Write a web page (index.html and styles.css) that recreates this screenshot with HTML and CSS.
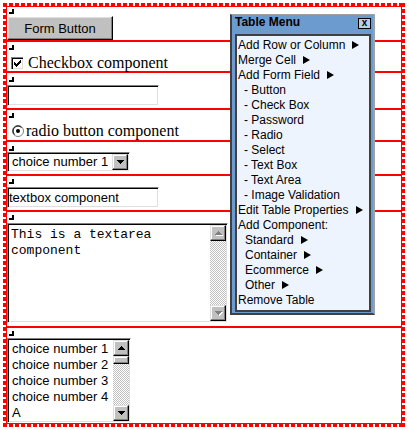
FILE: index.html
```html
<!DOCTYPE html>
<html lang="en">
<head>
    <meta charset="UTF-8">
    <meta name="viewport" content="width=device-width, initial-scale=1.0">
    <title>Form Table Editor</title>
    <link rel="stylesheet" href="styles.css">
</head>
<body>
    <div class="frame">
        <div class="grid">
            <div class="row r-button">
                <span class="mark"></span>
                <button class="btn">Form Button</button>
            </div>
            <div class="row r-check">
                <span class="mark"></span>
                <label class="choice">
                    <svg class="check" width="12" height="12" viewBox="0 0 12 12" shape-rendering="crispEdges">
                        <rect x="0" y="0" width="12" height="12" fill="#808080"/>
                        <rect x="1" y="1" width="11" height="11" fill="#000"/>
                        <rect x="2" y="2" width="10" height="10" fill="#dfdfdf"/>
                        <rect x="2" y="2" width="9" height="9" fill="#fff"/>
                        <path d="M2 4h1v3H2zM3 5h1v3H3zM4 6h1v3H4zM5 5h1v3H5zM6 4h1v3H6zM7 3h1v3H7zM8 2h1v3H8z" fill="#000" transform="translate(1 1)"/>
                    </svg>Checkbox component
                </label>
            </div>
            <div class="row r-text">
                <span class="mark"></span>
                <div class="sunken input"></div>
            </div>
            <div class="row r-radio">
                <span class="mark"></span>
                <label class="choice">
                    <svg class="radio" width="12" height="12" viewBox="0 0 12 12">
                        <circle cx="6" cy="6" r="5.5" fill="#fff" stroke="#808080"/>
                        <path d="M2.5 9.5A4.6 4.6 0 0 1 9.5 2.5" stroke="#000" fill="none"/>
                        <circle cx="6" cy="6" r="2" fill="#000"/>
                    </svg>radio button component
                </label>
            </div>
            <div class="row r-select">
                <span class="mark"></span>
                <div class="sunken select">
                    <span class="select-text">choice number 1</span>
                    <span class="sbtn">
                        <svg width="7" height="4" viewBox="0 0 7 4" shape-rendering="crispEdges"><path d="M0 0h7v1H0zM1 1h5v1H1zM2 2h3v1H2zM3 3h1v1H3z"/></svg>
                    </span>
                </div>
            </div>
            <div class="row r-textbox">
                <span class="mark"></span>
                <div class="sunken input">textbox component</div>
            </div>
            <div class="row r-area">
                <span class="mark"></span>
                <div class="sunken textarea">
                    <div class="area-text">This is a textarea component</div>
                    <div class="scroll">
                        <span class="sbtn off">
                            <svg width="7" height="4" viewBox="0 0 7 4" shape-rendering="crispEdges"><path d="M3 0h1v1H3zM2 1h3v1H2zM1 2h5v1H1zM0 3h7v1H0z"/></svg>
                        </span>
                        <span class="sbtn off down">
                            <svg width="7" height="4" viewBox="0 0 7 4" shape-rendering="crispEdges"><path d="M0 0h7v1H0zM1 1h5v1H1zM2 2h3v1H2zM3 3h1v1H3z"/></svg>
                        </span>
                    </div>
                </div>
            </div>
            <div class="row r-list">
                <span class="mark"></span>
                <div class="sunken listbox">
                    <ul class="options">
                        <li>choice number 1</li>
                        <li>choice number 2</li>
                        <li>choice number 3</li>
                        <li>choice number 4</li>
                        <li>A</li>
                    </ul>
                    <div class="scroll">
                        <span class="sbtn">
                            <svg width="7" height="4" viewBox="0 0 7 4" shape-rendering="crispEdges"><path d="M3 0h1v1H3zM2 1h3v1H2zM1 2h5v1H1zM0 3h7v1H0z"/></svg>
                        </span>
                        <span class="sbtn thumb"></span>
                        <span class="sbtn down">
                            <svg width="7" height="4" viewBox="0 0 7 4" shape-rendering="crispEdges"><path d="M0 0h7v1H0zM1 1h5v1H1zM2 2h3v1H2zM3 3h1v1H3z"/></svg>
                        </span>
                    </div>
                </div>
            </div>
        </div>
    </div>

    <div class="menu">
        <div class="menu-title">
            <span>Table Menu</span>
            <span class="close">x</span>
        </div>
        <ul class="menu-body">
            <li>Add Row or Column<span class="tri"></span></li>
            <li>Merge Cell<span class="tri"></span></li>
            <li>Add Form Field<span class="tri"></span></li>
            <li class="sub">- Button</li>
            <li class="sub">- Check Box</li>
            <li class="sub">- Password</li>
            <li class="sub">- Radio</li>
            <li class="sub">- Select</li>
            <li class="sub">- Text Box</li>
            <li class="sub">- Text Area</li>
            <li class="sub">- Image Validation</li>
            <li>Edit Table Properties<span class="tri"></span></li>
            <li>Add Component:</li>
            <li class="sub2">Standard<span class="tri"></span></li>
            <li class="sub2">Container<span class="tri"></span></li>
            <li class="sub2">Ecommerce<span class="tri"></span></li>
            <li class="sub2">Other<span class="tri"></span></li>
            <li>Remove Table</li>
        </ul>
    </div>
</body>
</html>
```

FILE: styles.css
```css
body {
    margin: 0;
    background-color: #fff;
    color: #000;
    font-family: "Liberation Serif", "Times New Roman", serif;
    font-size: 16px;
}

/* dashed outline round the whole table */
.frame {
    width: 396px;
    margin: 3px;
    padding: 3px;
    background:
        repeating-linear-gradient(90deg, red 0 4px, transparent 4px 6px) top / 100% 3px no-repeat,
        repeating-linear-gradient(90deg, red 0 4px, transparent 4px 6px) bottom / 100% 3px no-repeat,
        repeating-linear-gradient(180deg, red 0 4px, transparent 4px 6px) left / 3px 100% no-repeat,
        repeating-linear-gradient(180deg, red 0 4px, transparent 4px 6px) right / 3px 100% no-repeat;
}

.grid {
    border: 1px solid red;
}

.row {
    display: flex;
    flex-direction: column;
    align-items: flex-start;
    border-bottom: 2px solid red;
}

.row:last-child {
    border-bottom: none;
}

.r-button { height: 33px; }
.r-check { height: 29px; }
.r-text { height: 35px; }
.r-radio { height: 30px; }
.r-select { height: 32px; }
.r-textbox { height: 34px; }
.r-area { height: 114px; }
.r-list { height: 95px; }

.mark {
    flex: none;
    width: 3px;
    height: 3px;
    margin: 3px 0 0 2px;
    border-right: 2px solid #000;
    border-bottom: 2px solid #000;
}

.r-button .mark { margin-top: 2px; }
.r-text .mark,
.r-select .mark { margin-top: 4px; }

.btn {
    width: 106px;
    height: 24px;
    margin-top: 2px;
    padding: 0;
    font: 13px "Liberation Sans", Arial, sans-serif;
    color: #000;
    background-color: #c0c0c0;
    border: 1px solid;
    border-color: #fff #000 #000 #fff;
    box-shadow: inset -1px -1px #808080, inset 1px 1px #dfdfdf;
}

.choice {
    display: block;
    line-height: 18px;
    margin-top: 4px;
}

.r-radio .choice { margin-top: 4px; }

.choice svg {
    vertical-align: -1px;
}

.check { margin: 0 5px 0 4px; }
.radio { margin: 0 2px 0 5px; }

/* win95 style sunken fields */
.sunken {
    box-sizing: border-box;
    background-color: #fff;
    border: 1px solid;
    border-color: #808080 #fff #fff #808080;
    box-shadow: inset 1px 1px #000, inset -1px -1px #dfdfdf;
    font: 13px "Liberation Sans", Arial, sans-serif;
}

.input {
    width: 152px;
    height: 21px;
    margin-top: 3px;
    padding-left: 1px;
    line-height: 19px;
    white-space: nowrap;
}

.select {
    display: flex;
    width: 123px;
    height: 20px;
    margin-top: 1px;
    padding: 1px;
}

.select-text {
    flex: 1;
    padding-left: 3px;
    line-height: 16px;
}

.sbtn {
    display: flex;
    align-items: center;
    justify-content: center;
    flex: none;
    width: 16px;
    height: 16px;
    box-sizing: border-box;
    background-color: #c0c0c0;
    border: 1px solid;
    border-color: #dfdfdf #000 #000 #dfdfdf;
    box-shadow: inset -1px -1px #808080, inset 1px 1px #fff;
}

.sbtn.off svg {
    fill: #808080;
    filter: drop-shadow(1px 1px 0 #fff);
}

.sbtn.down { margin-top: auto; }
.sbtn.thumb { height: 8px; }

.scroll {
    display: flex;
    flex-direction: column;
    width: 16px;
    background: repeating-conic-gradient(#c0c0c0 0 25%, #fff 0 50%) 0 0 / 2px 2px;
}

.textarea {
    display: flex;
    width: 221px;
    height: 100px;
    margin-top: 3px;
    padding: 1px;
}

.area-text {
    flex: 1;
    padding: 2px 2px 0 2px;
    font: 13px/16px "Liberation Mono", "Courier New", monospace;
}

.listbox {
    display: flex;
    width: 124px;
    height: 85px;
    margin-top: 2px;
    padding: 1px;
}

.options {
    flex: 1;
    margin: 0;
    padding: 1px 0 0 3px;
    list-style: none;
    line-height: 16px;
    overflow: hidden;
    white-space: nowrap;
}

/* floating table menu */
.menu {
    position: absolute;
    left: 230px;
    top: 14px;
    width: 136px;
    padding: 0 2px 1px 3px;
    background-color: #6b9bcf;
    border-style: solid;
    border-width: 1px 2px 2px 2px;
    border-color: #a0a0a0 #a0a0a0 #404040 #404040;
    font-family: "Liberation Sans", Arial, sans-serif;
    font-size: 12px;
}

.menu-title {
    display: flex;
    justify-content: space-between;
    align-items: flex-start;
    height: 19px;
    font-weight: bold;
    line-height: 15px;
}

.close {
    width: 13px;
    height: 11px;
    margin-top: 3px;
    box-sizing: border-box;
    border: 1px solid #000;
    background-color: #b7cde9;
    font: bold 10px/8px "Liberation Sans", Arial, sans-serif;
    text-align: center;
}

.menu-body {
    margin: 0;
    padding: 2px 0 2px 1px;
    list-style: none;
    background-color: #eef4fe;
    border: 2px solid #404040;
    line-height: 15px;
}

.menu-body .sub { padding-left: 6px; }
.menu-body .sub2 { padding-left: 7px; }

.tri {
    display: inline-block;
    margin-left: 7px;
    border-left: 7px solid #000;
    border-top: 4px solid transparent;
    border-bottom: 4px solid transparent;
}
```
